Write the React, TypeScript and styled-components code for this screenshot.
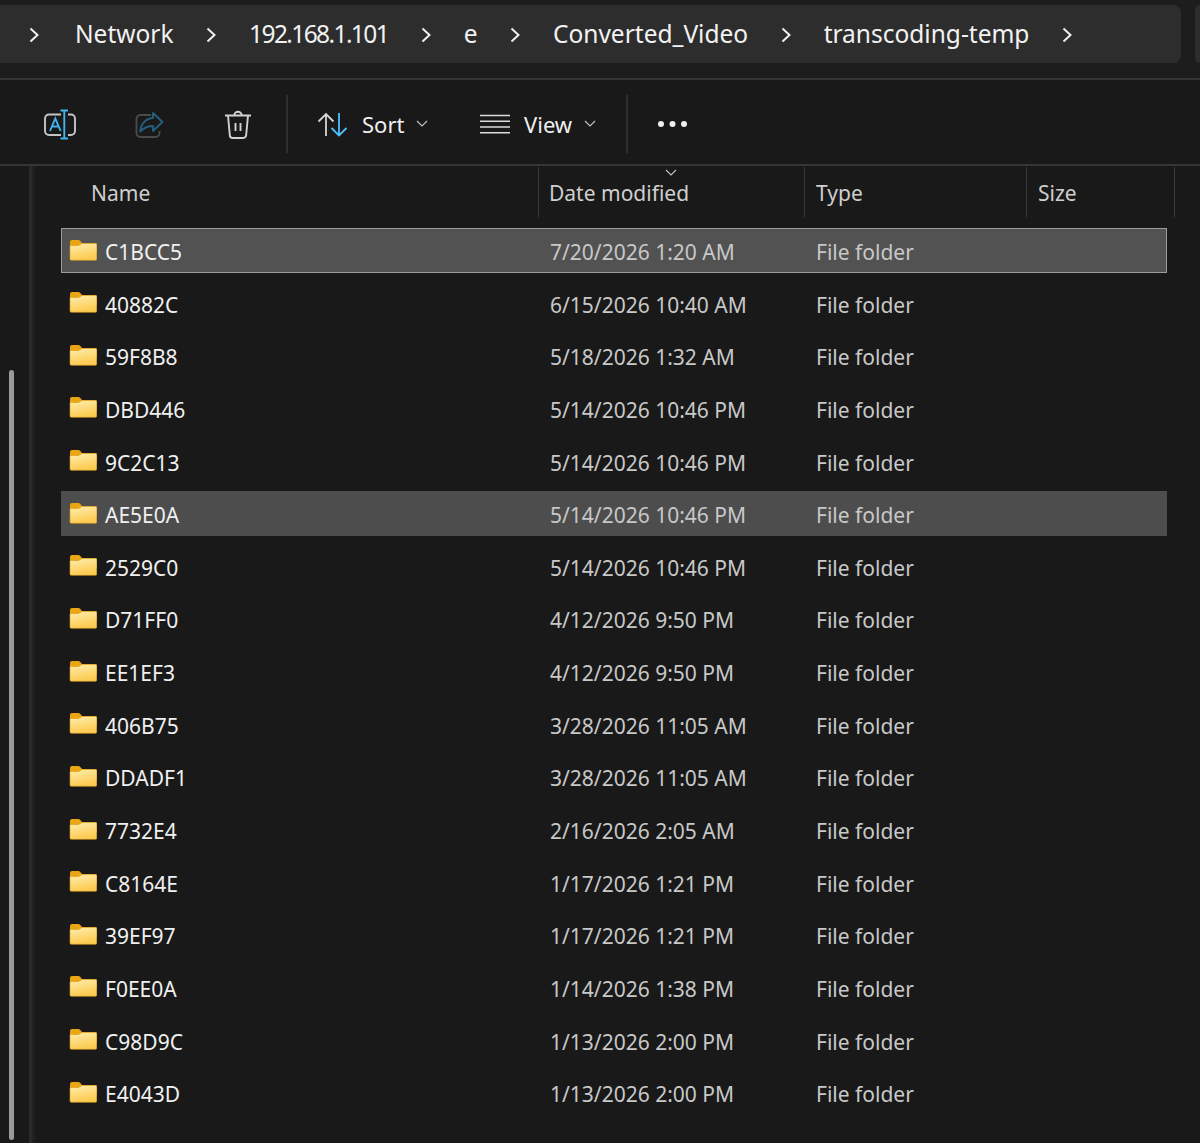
import styled, { createGlobalStyle } from "styled-components";

const crumbs = ["Network", "192.168.1.101", "e", "Converted_Video", "transcoding-temp"];

const files = [
    { name: "C1BCC5", date: "7/20/2026 1:20 AM", state: "focus" },
    { name: "40882C", date: "6/15/2026 10:40 AM" },
    { name: "59F8B8", date: "5/18/2026 1:32 AM" },
    { name: "DBD446", date: "5/14/2026 10:46 PM" },
    { name: "9C2C13", date: "5/14/2026 10:46 PM" },
    { name: "AE5E0A", date: "5/14/2026 10:46 PM", state: "selected" },
    { name: "2529C0", date: "5/14/2026 10:46 PM" },
    { name: "D71FF0", date: "4/12/2026 9:50 PM" },
    { name: "EE1EF3", date: "4/12/2026 9:50 PM" },
    { name: "406B75", date: "3/28/2026 11:05 AM" },
    { name: "DDADF1", date: "3/28/2026 11:05 AM" },
    { name: "7732E4", date: "2/16/2026 2:05 AM" },
    { name: "C8164E", date: "1/17/2026 1:21 PM" },
    { name: "39EF97", date: "1/17/2026 1:21 PM" },
    { name: "F0EE0A", date: "1/14/2026 1:38 PM" },
    { name: "C98D9C", date: "1/13/2026 2:00 PM" },
    { name: "E4043D", date: "1/13/2026 2:00 PM" },
];

function Chevron() {
    return (
        <svg width="10" height="18" viewBox="0 0 10 18" fill="none" stroke="#f0f0f0" strokeWidth="2">
            <path d="M1.5 3.5 L8.5 10 L1.5 16.5" />
        </svg>
    );
}

function SmallChevron() {
    return (
        <svg width="12" height="7" viewBox="0 0 12 7" fill="none" stroke="#c4c4c4" strokeWidth="1.1">
            <path d="M1 1 L6 6 L11 1" />
        </svg>
    );
}

function RenameIcon() {
    return (
        <svg width="32" height="32" viewBox="0 0 32 32" fill="none" strokeWidth="1.9">
            <path d="M17 6.500H5a4 4 0 0 0-4 4v12.500a4 4 0 0 0 4 4h12" stroke="#c4c4c4" />
            <path d="M24 6.500h3a4 4 0 0 1 4 4v12.500a4 4 0 0 1-4 4h-3" stroke="#c4c4c4" />
            <path d="M20.300 2.500v28M16.500 2.500h7.500M16.500 30.500h7.500" stroke="#3fb4ee" />
            <path d="M6 23 L11.300 10.500 L16.600 23M8 18.500h6.600" stroke="#3fb4ee" />
        </svg>
    );
}

function ShareIcon() {
    return (
        <svg width="32" height="32" viewBox="0 0 32 32" fill="none" strokeWidth="1.9">
            <path d="M18 7H7.500a4 4 0 0 0-4 4v14a4 4 0 0 0 4 4h15a4 4 0 0 0 4-4v-2" stroke="#4a4a4a" />
            <path d="M29.500 14 L20 5 V10 C12.500 10.500 7.800 16 7.300 23.500 C11 19.500 15 18 20 18 V23 Z" stroke="#255f7e" strokeLinejoin="round" />
        </svg>
    );
}

function TrashIcon() {
    return (
        <svg width="32" height="32" viewBox="0 0 32 32" fill="none" stroke="#d2d2d2" strokeWidth="1.9">
            <path d="M3 7.500h26M12.200 7.500a3.800 3.800 0 0 1 7.600 0" />
            <path d="M6 7.500 L7.800 27a3 3 0 0 0 3 3h10.400a3 3 0 0 0 3-3 L26 7.500" />
            <path d="M13.500 15v8M18.500 15v8" />
        </svg>
    );
}

function SortIcon() {
    return (
        <svg width="32" height="32" viewBox="0 0 32 32" fill="none" strokeWidth="1.8">
            <path d="M10 28V6M2.500 13.500 L10 6 L17.500 13.500" stroke="#d4d4d4" />
            <path d="M23 5V27.500M15.500 20 L23 27.500 L30.500 20" stroke="#4cc2ff" />
        </svg>
    );
}

function ListIcon() {
    return (
        <svg width="30" height="20" viewBox="0 0 30 20" fill="none" stroke="#dcdcdc" strokeWidth="1.5">
            <path d="M0 1.500h30M0 7.300h30M0 13h30M0 18.700h30" />
        </svg>
    );
}

function DotsIcon() {
    return (
        <svg width="32" height="8" viewBox="0 0 32 8" fill="#f0f0f0">
            <circle cx="4" cy="4" r="3" />
            <circle cx="15.500" cy="4" r="3" />
            <circle cx="27" cy="4" r="3" />
        </svg>
    );
}

function FolderIcon() {
    return (
        <svg width="28" height="22" viewBox="0 0 28 22">
            <defs>
                <linearGradient id="folderFace" x1="0" y1="0" x2="0.3" y2="1">
                    <stop offset="0" stopColor="#ffeeae" />
                    <stop offset="1" stopColor="#fccb52" />
                </linearGradient>
            </defs>
            <path d="M1 3a2 2 0 0 1 2-2h6.500a2 2 0 0 1 1.500.700 L13 4 H26a2 2 0 0 1 2 2 v8 H1 Z" fill="#e9a612" />
            <path d="M1 6.500 H9.500 L13 4.500 H26.500a1.300 1.300 0 0 1 1.300 1.300 V20a1.300 1.300 0 0 1-1.300 1.300 H2.300a1.300 1.300 0 0 1-1.300-1.300 Z" fill="url(#folderFace)" stroke="#d99a1c" strokeWidth="0.6" />
        </svg>
    );
}

export default function App() {
    return (
        <Page>
            <GlobalStyle />
            <TopBar>
                <AddressBar>
                    <RootChevron><Chevron /></RootChevron>
                    {crumbs.map((crumb) => (
                        <Crumb key={crumb}>
                            <CrumbText $tight={/^\d/.test(crumb)}>{crumb}</CrumbText>
                            <Chevron />
                        </Crumb>
                    ))}
                </AddressBar>
                <SearchBox />
            </TopBar>
            <Toolbar>
                <IconButton><RenameIcon /></IconButton>
                <IconButton><ShareIcon /></IconButton>
                <IconButton><TrashIcon /></IconButton>
                <Separator />
                <MenuButton $width={164}>
                    <SortIcon />
                    <MenuLabel>Sort</MenuLabel>
                    <SmallChevron />
                </MenuButton>
                <MenuButton $width={170}>
                    <ListIcon />
                    <MenuLabel>View</MenuLabel>
                    <SmallChevron />
                </MenuButton>
                <Separator />
                <MoreButton><DotsIcon /></MoreButton>
            </Toolbar>
            <Body>
                <ScrollTrack>
                    <ScrollThumb />
                </ScrollTrack>
                <PaneEdge />
                <Main>
                    <HeaderRow>
                        <HeaderCell $width={504} $indent={56}>Name</HeaderCell>
                        <HeaderCell $width={266} $indent={10}>
                            <SortMark><SmallChevron /></SortMark>
                            Date modified
                        </HeaderCell>
                        <HeaderCell $width={222} $indent={11}>Type</HeaderCell>
                        <HeaderCell $width={148} $indent={11}>Size</HeaderCell>
                    </HeaderRow>
                    <FileList>
                        {files.map((file) => (
                            <FileRow key={file.name} $state={file.state}>
                                <NameCell>
                                    <FolderIcon />
                                    <FileName>{file.name}</FileName>
                                </NameCell>
                                <MutedCell>{file.date}</MutedCell>
                                <MutedCell>File folder</MutedCell>
                            </FileRow>
                        ))}
                    </FileList>
                </Main>
            </Body>
        </Page>
    );
}

const GlobalStyle = createGlobalStyle`
    html, body {
        margin: 0;
        padding: 0;
        background: #191919;
    }
`;

const Page = styled.div`
    display: flex;
    flex-direction: column;
    width: 1200px;
    height: 1143px;
    overflow: hidden;
    background: #191919;
    font-family: "Noto Sans", "Open Sans", sans-serif;
`;

const TopBar = styled.div`
    display: flex;
    gap: 14px;
    height: 78px;
    flex-shrink: 0;
    padding-top: 5px;
    box-sizing: border-box;
    background: #1d1d1d;
`;

const AddressBar = styled.div`
    display: flex;
    align-items: center;
    gap: 33px;
    flex-shrink: 0;
    width: 1181px;
    height: 58px;
    padding-left: 29px;
    box-sizing: border-box;
    background: #2d2d2d;
    border-radius: 0 8px 8px 0;
`;

const RootChevron = styled.span`
    display: flex;
    margin-right: 3px;
`;

const Crumb = styled.div`
    display: flex;
    align-items: center;
    gap: 32.500px;
`;

const CrumbText = styled.span<{ $tight?: boolean }>`
    margin-bottom: 2px;
    font-size: 24.500px;
    letter-spacing: ${(props) => (props.$tight ? "-1.600px" : "0")};
    color: #f2f2f2;
    white-space: nowrap;
`;

const SearchBox = styled.div`
    flex: 1;
    height: 58px;
    background: #2d2d2d;
    border-radius: 8px 0 0 8px;
`;

const Toolbar = styled.div`
    display: flex;
    align-items: center;
    height: 88px;
    flex-shrink: 0;
    padding: 3px 0 0 15px;
    box-sizing: border-box;
    background: #191919;
    border-top: 2px solid #353535;
    border-bottom: 2px solid #353535;
`;

const IconButton = styled.div`
    display: flex;
    justify-content: center;
    align-items: center;
    width: 89px;
`;

const Separator = styled.div`
    width: 2px;
    height: 58px;
    margin-left: 4px;
    background: #2f2f2f;
`;

const MenuButton = styled.div<{ $width: number }>`
    display: flex;
    align-items: center;
    width: ${(props) => props.$width}px;
    padding-left: 28px;
    box-sizing: border-box;
    color: #f0f0f0;
`;

const MenuLabel = styled.span`
    margin: 0 12px 0 14px;
    font-size: 22px;
`;

const MoreButton = styled.div`
    display: flex;
    align-items: center;
    padding-left: 29px;
`;

const Body = styled.div`
    display: flex;
    flex: 1;
    min-height: 0;
`;

const ScrollTrack = styled.div`
    width: 29px;
    flex-shrink: 0;
    padding: 204px 0 0 9px;
    box-sizing: border-box;
    background: #191919;
`;

const ScrollThumb = styled.div`
    width: 5px;
    height: 770px;
    background: #9a9a9a;
    border-radius: 3px;
`;

const PaneEdge = styled.div`
    width: 6px;
    flex-shrink: 0;
    background: linear-gradient(90deg, #292929 50%, #212121 50%);
`;

const Main = styled.div`
    flex: 1;
    min-width: 0;
`;

const HeaderRow = styled.div`
    display: flex;
    height: 50px;
    margin-top: 1px;
`;

const HeaderCell = styled.div<{ $width: number; $indent: number }>`
    position: relative;
    display: flex;
    align-items: center;
    flex-shrink: 0;
    width: ${(props) => props.$width}px;
    padding: 1px 0 0 ${(props) => props.$indent}px;
    box-sizing: border-box;
    border-right: 1px solid #3a3a3a;
    font-size: 21px;
    color: #cfcfcf;
`;

const SortMark = styled.span`
    position: absolute;
    top: 1px;
    left: 126px;
    line-height: 0;
`;

const FileList = styled.div`
    display: flex;
    flex-direction: column;
    gap: 7.650px;
    width: 1106px;
    margin: 11px 0 0 26px;
`;

const FileRow = styled.div<{ $state?: string }>`
    display: grid;
    grid-template-columns: 488px 266px 1fr;
    align-items: center;
    flex-shrink: 0;
    height: 45px;
    box-sizing: border-box;
    border: ${(props) => (props.$state === "focus" ? "1px solid #9b9b9b" : "1px solid transparent")};
    background: ${(props) => (props.$state === "focus" ? "#525252" : props.$state === "selected" ? "#4d4d4d" : "transparent")};
`;

const NameCell = styled.div`
    display: flex;
    align-items: center;
    gap: 8px;
    padding-left: 7px;
    margin-top: -2px;
`;

const FileName = styled.span`
    margin-top: 5px;
    font-size: 21px;
    color: #f0f0f0;
`;

const MutedCell = styled.div`
    padding-top: 3px;
    font-size: 21px;
    color: #c8c8c8;
    white-space: nowrap;
`;
